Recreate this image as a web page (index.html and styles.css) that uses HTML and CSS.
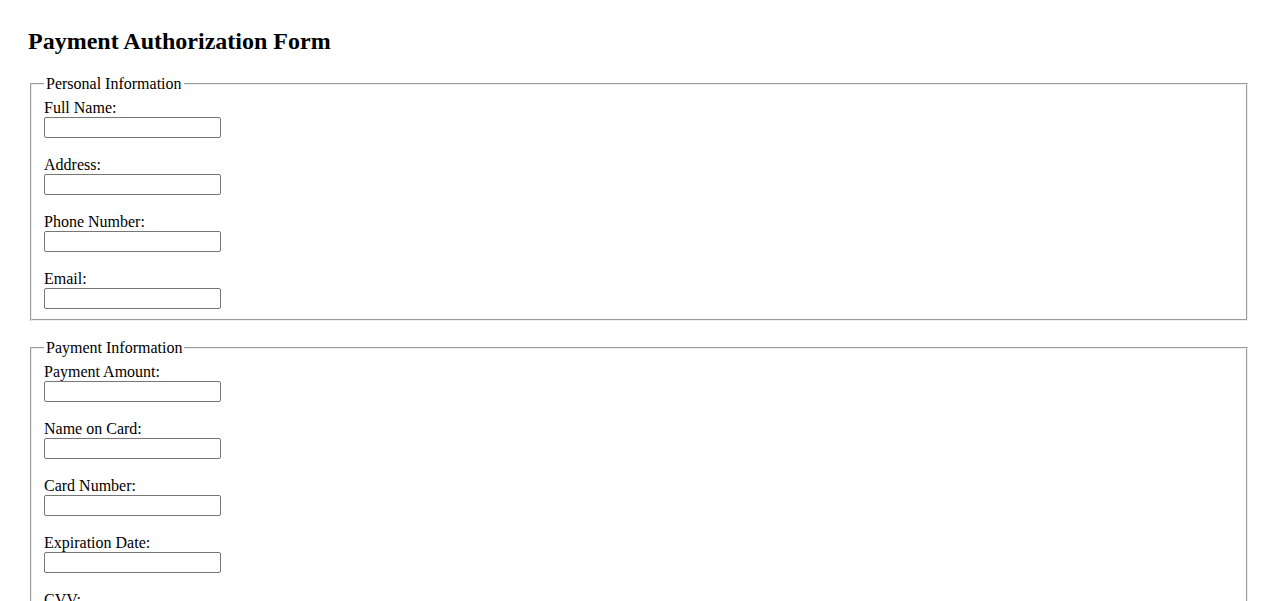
FILE: index.html
```html
<!DOCTYPE html>
<html lang="en">
<head>
    <meta charset="UTF-8">
    <meta name="viewport" content="width=device-width, initial-scale=1.0">
    <title>Payment Authorization Form</title>
    <link rel="stylesheet" href="styles.css">
</head>
<body>
    <h2>Payment Authorization Form</h2>
    <form class="auth-form">
        <fieldset>
            <legend>Personal Information</legend>
            <div class="field">
                <label for="fullName">Full Name:</label>
                <input type="text" id="fullName" name="fullName">
            </div>
            <div class="field">
                <label for="address">Address:</label>
                <input type="text" id="address" name="address">
            </div>
            <div class="field">
                <label for="phone">Phone Number:</label>
                <input type="tel" id="phone" name="phone">
            </div>
            <div class="field">
                <label for="email">Email:</label>
                <input type="email" id="email" name="email">
            </div>
        </fieldset>

        <fieldset>
            <legend>Payment Information</legend>
            <div class="field">
                <label for="amount">Payment Amount:</label>
                <input type="text" id="amount" name="amount">
            </div>
            <div class="field">
                <label for="cardName">Name on Card:</label>
                <input type="text" id="cardName" name="cardName">
            </div>
            <div class="field">
                <label for="cardNumber">Card Number:</label>
                <input type="text" id="cardNumber" name="cardNumber">
            </div>
            <div class="field">
                <label for="expiry">Expiration Date:</label>
                <input type="text" id="expiry" name="expiry">
            </div>
            <div class="field">
                <label for="cvv">CVV:</label>
                <input type="text" id="cvv" name="cvv">
            </div>
        </fieldset>

        <button type="submit">Authorize Payment</button>
    </form>
</body>
</html>
```

FILE: styles.css
```css
body {
    margin: 8px;
    padding: 20px;
    font-family: "Liberation Serif", "Times New Roman", serif;
    font-size: 16px;
    color: #000;
    background: #fff;
}
h2 {
    margin: 0 0 0.83em;
    font-size: 24px;
}
fieldset {
    margin: 0 2px 18px;
    padding: 6.2px 12px 10px;
    border: 2px groove #eeeeee;
}
legend {
    padding: 0 2px;
}
label {
    display: block;
}
input {
    display: block;
    box-sizing: border-box;
    width: 177px;
    height: 21px;
    margin: 0;
    padding: 1px 2px;
    border: 1px solid #767676;
    border-radius: 2px;
    font-family: "Liberation Sans", Arial, sans-serif;
    font-size: 13.33px;
}
.field + .field {
    margin-top: 18px;
}
```
